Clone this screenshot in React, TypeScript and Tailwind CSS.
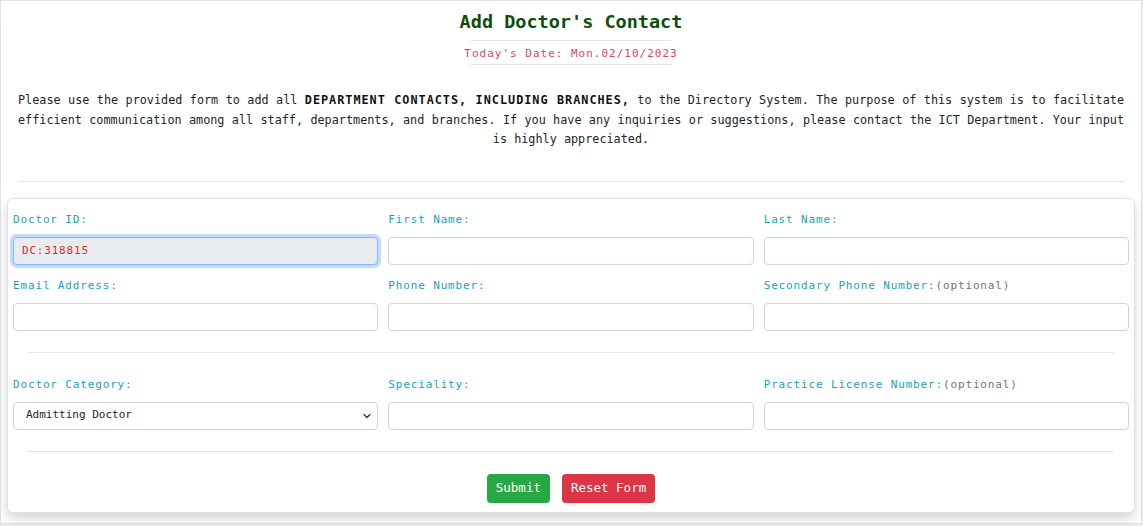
import React from 'react';

function Label({ text, optional }: { text: string; optional?: boolean }) {
    return (
        <label className="block text-[11px] leading-[16px] tracking-[0.85px] text-[#17a2b8] mb-[9px] whitespace-nowrap">
            {text}
            {optional && <span className="text-[#6c757d]">(optional)</span>}
        </label>
    );
}

function TextInput() {
    return (
        <input type="text" className="block w-full h-[28px] px-2 bg-white border border-[#ced4da] rounded-[4px] text-[11px] outline-none" />
    );
}

export default function App() {
    return (
        <div className="min-h-screen bg-[#ececec] font-['DejaVu_Sans_Mono',monospace] text-[#212529]">
            <div className="w-[1142px] bg-white border border-[#dee2e6] px-[6px] pt-[7px] pb-[10px]">
                <h1 className="text-center font-bold text-[18.5px] leading-[28px] text-[#0c4f0c]">Add Doctor's Contact</h1>
                <div className="w-[200px] mx-auto mt-[4px] border-t border-b border-[#dee2e6] pt-[2px] leading-[21px] flex justify-center">
                    <span className="whitespace-nowrap text-[11px] tracking-[1px] text-[#e0455c]">Today's Date: Mon.02/10/2023</span>
                </div>
                <p className="mt-[26px] px-[11px] text-[11.8px] leading-[19.5px] text-justify [text-align-last:center]">
                    Please use the provided form to add all <b className="tracking-[1px] text-[#111]">DEPARTMENT CONTACTS, INCLUDING BRANCHES,</b> to the Directory System. The purpose of this system is to facilitate efficient communication among all staff, departments, and branches. If you have any inquiries or suggestions, please contact the ICT Department. Your input is highly appreciated.
                </p>
                <hr className="mt-[31px] mx-[11px] border-t border-[#e3e3e3]" />
                <form className="mt-[16px] bg-white border border-[#dee2e6] rounded-[6px] shadow-[0_6px_12px_rgba(0,0,0,0.16)] px-[5px] pt-[13px] pb-[9px]">
                    <div className="grid grid-cols-3 gap-x-[10px] gap-y-[13px]">
                        <div>
                            <Label text="Doctor ID:" />
                            <input type="text" readOnly value="DC:318815" className="block w-full h-[28px] pl-[8px] bg-[#e9ecef] border border-[#86b7fe] rounded-[4px] shadow-[0_0_0_3px_rgba(13,110,253,0.25)] text-[11px] tracking-[0.8px] text-[#d92b1f] outline-none" />
                        </div>
                        <div>
                            <Label text="First Name:" />
                            <TextInput />
                        </div>
                        <div>
                            <Label text="Last Name:" />
                            <TextInput />
                        </div>
                        <div>
                            <Label text="Email Address:" />
                            <TextInput />
                        </div>
                        <div>
                            <Label text="Phone Number:" />
                            <TextInput />
                        </div>
                        <div>
                            <Label text="Secondary Phone Number:" optional />
                            <TextInput />
                        </div>
                    </div>
                    <hr className="mt-[21px] mx-[15px] border-t border-[#e3e3e3]" />
                    <div className="mt-[24px] grid grid-cols-3 gap-x-[10px]">
                        <div>
                            <Label text="Doctor Category:" />
                            <div className="relative">
                                <select className="block w-full h-[28px] pl-[12px] appearance-none bg-white border border-[#ced4da] rounded-[4px] text-[11px] text-[#212529] outline-none">
                                    <option>Admitting Doctor</option>
                                    <option>Consulting Doctor</option>
                                    <option>Resident Doctor</option>
                                </select>
                                <svg className="absolute right-[6px] top-[10px] pointer-events-none" width="10" height="8" viewBox="0 0 16 16">
                                    <path d="M2 5l6 6 6-6" fill="none" stroke="#343a40" strokeWidth="2.6" strokeLinecap="round" strokeLinejoin="round" />
                                </svg>
                            </div>
                        </div>
                        <div>
                            <Label text="Speciality:" />
                            <TextInput />
                        </div>
                        <div>
                            <Label text="Practice License Number:" optional />
                            <TextInput />
                        </div>
                    </div>
                    <hr className="mt-[21px] mx-[15px] border-t border-[#e3e3e3]" />
                    <div className="mt-[22px] flex justify-center gap-[12px]">
                        <button type="submit" className="h-[29px] px-[9px] rounded-[4px] bg-[#28a745] text-white text-[12.5px]">Submit</button>
                        <button type="reset" className="h-[29px] px-[9px] rounded-[4px] bg-[#dc3545] text-white text-[12.5px]">Reset Form</button>
                    </div>
                </form>
            </div>
        </div>
    );
}
